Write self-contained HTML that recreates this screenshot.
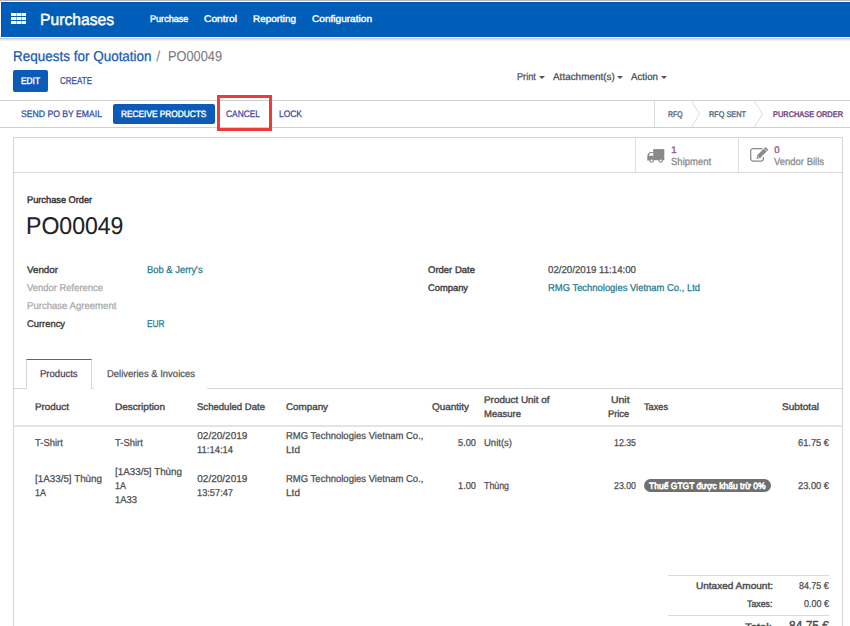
<!DOCTYPE html>
<html><head><meta charset="utf-8"><title>Purchase Order PO00049</title>
<style>
html,body{margin:0;padding:0;background:#fff;width:850px;height:626px;overflow:hidden;position:relative;font-family:"Liberation Sans", sans-serif;text-rendering:geometricPrecision;}
</style></head><body>
<div style="position:absolute;left:0px;top:0px;width:850px;height:1px;background:#b8b8b8"></div>
<div style="position:absolute;left:1px;top:2px;width:849px;height:35px;background:#005EB8;box-shadow:inset 1px 1px 0 #0050ae"></div>
<div style="position:absolute;left:0px;top:38px;width:850px;height:1px;background:#c9c9c9"></div>
<div style="position:absolute;left:0px;top:39px;width:850px;height:1px;background:#e2e2e2"></div>
<div style="position:absolute;left:0px;top:40px;width:850px;height:1px;background:#f2f2f2"></div>
<div style="position:absolute;left:11px;top:13px;width:15px;height:3px;background:#fff"></div>
<div style="position:absolute;left:11px;top:17px;width:15px;height:3px;background:#fff"></div>
<div style="position:absolute;left:11px;top:21px;width:15px;height:3px;background:#fff"></div>
<div style="position:absolute;left:16px;top:13px;width:1px;height:11px;background:rgba(0,94,184,0.45)"></div>
<div style="position:absolute;left:21px;top:13px;width:1px;height:11px;background:rgba(0,94,184,0.45)"></div>
<div style="position:absolute;left:13px;top:70px;width:35px;height:22px;background:#0a5cb8;border-radius:2px"></div>
<div style="position:absolute;left:539px;top:76px;width:0;height:0;border-left:3px solid transparent;border-right:3px solid transparent;border-top:3px solid #555"></div>
<div style="position:absolute;left:616.5px;top:76px;width:0;height:0;border-left:3px solid transparent;border-right:3px solid transparent;border-top:3px solid #555"></div>
<div style="position:absolute;left:660.5px;top:76px;width:0;height:0;border-left:3px solid transparent;border-right:3px solid transparent;border-top:3px solid #555"></div>
<div style="position:absolute;left:0px;top:100px;width:850px;height:1px;background:#d0d0d0"></div>
<div style="position:absolute;left:0px;top:127px;width:850px;height:1px;background:#d0d0d0"></div>
<div style="position:absolute;left:113px;top:104px;width:102px;height:20px;background:#0a5cb8;border-radius:2px"></div>
<div style="position:absolute;left:654px;top:101px;width:1px;height:26px;background:#dcdcdc"></div>
<svg style="position:absolute;left:0;top:0" width="850" height="626"><g fill="none" stroke="#dedede" stroke-width="1"><polyline points="691.5,101 699.5,114 691.5,127"/><polyline points="754.5,101 762.5,114 754.5,127"/></g></svg>
<div style="position:absolute;left:217px;top:95px;width:55px;height:36px;border:3px solid #ee3a3a;box-sizing:border-box"></div>
<div style="position:absolute;left:13px;top:137px;width:830px;height:600px;border:1px solid #d4d4d4;box-sizing:border-box;background:#fff"></div>
<div style="position:absolute;left:14px;top:172px;width:828px;height:1px;background:#dcd8dc"></div>
<div style="position:absolute;left:635px;top:138px;width:1px;height:34px;background:#e0e0e0"></div>
<div style="position:absolute;left:738px;top:138px;width:1px;height:34px;background:#e0e0e0"></div>
<svg style="position:absolute;left:0;top:0" width="850" height="626" viewBox="0 0 850 626"><g fill="#8a8a8a"><rect x="653.2" y="149.1" width="11.1" height="11.1"/><path d="M647.2 160.6 L647.4 155.6 Q647.9 152.1 651.2 152.1 L653.6 152.1 L653.6 160.6 Z"/><circle cx="651.6" cy="160.6" r="2.2"/><circle cx="660.7" cy="160.6" r="2.2"/></g><path fill="#fff" d="M648.9 155.8 L649.1 154.7 Q649.6 152.9 651.2 152.9 L653.1 152.9 V155.8 Z"/><circle cx="651.6" cy="160.6" r="1.1" fill="#fff"/><circle cx="660.7" cy="160.6" r="1.1" fill="#fff"/><path fill="none" stroke="#8a8a8a" stroke-width="1.25" d="M762.5 148.7 H753.1 a2.4 2.4 0 0 0 -2.4 2.4 V158.6 a2.4 2.4 0 0 0 2.4 2.4 H761.1 a2.4 2.4 0 0 0 2.4 -2.4 V157"/><path fill="#8a8a8a" d="M756.4 158.9 L757.4 155.1 L765.6 146.9 L768.4 149.7 L760.2 157.9 Z"/><path stroke="#fff" stroke-width="0.7" d="M764.1 148.4 L766.9 151.2"/><path fill="#fff" d="M757.6 157.7 L758.1 156.2 L759.1 157.2 Z"/></svg>
<div style="position:absolute;left:14px;top:388px;width:12px;height:1px;background:#d8d8d8"></div>
<div style="position:absolute;left:92px;top:388px;width:2px;height:1px;background:#d8d8d8"></div>
<div style="position:absolute;left:207px;top:388px;width:635px;height:1px;background:#d8d8d8"></div>
<div style="position:absolute;left:26px;top:359px;width:66px;height:30px;border:1px solid #d8d8d8;border-top:1px solid #7f4f86;border-bottom:none;box-sizing:border-box;background:#fff"></div>
<div style="position:absolute;left:14px;top:425px;width:828px;height:2px;background:#e4e4e4"></div>
<div style="position:absolute;left:643.6px;top:479.4px;width:127.2px;height:13px;background:#6f6f6f;border-radius:7px"></div>
<div style="position:absolute;left:668px;top:575px;width:161px;height:1px;background:#dadada"></div>
<div style="position:absolute;left:668px;top:615px;width:161px;height:1px;background:#dadada"></div>
<div style="position:absolute;left:39.53px;top:12px;white-space:nowrap;font-size:16.2px;line-height:16.2px;font-weight:400;color:#ffffff;transform:scaleX(0.9677);transform-origin:0 0;-webkit-text-stroke:0.45px #ffffff;">Purchases</div>
<div style="position:absolute;left:150.00px;top:15px;white-space:nowrap;font-size:9.6px;line-height:9.6px;font-weight:400;color:#ffffff;transform:scaleX(0.9475);transform-origin:0 0;-webkit-text-stroke:0.4px #ffffff;">Purchase</div>
<div style="position:absolute;left:204.40px;top:15px;white-space:nowrap;font-size:9.6px;line-height:9.6px;font-weight:400;color:#ffffff;transform:scaleX(1.0669);transform-origin:0 0;-webkit-text-stroke:0.4px #ffffff;">Control</div>
<div style="position:absolute;left:253.00px;top:15px;white-space:nowrap;font-size:9.6px;line-height:9.6px;font-weight:400;color:#ffffff;transform:scaleX(1.0334);transform-origin:0 0;-webkit-text-stroke:0.4px #ffffff;">Reporting</div>
<div style="position:absolute;left:312.30px;top:15px;white-space:nowrap;font-size:9.6px;line-height:9.6px;font-weight:400;color:#ffffff;transform:scaleX(1.0512);transform-origin:0 0;-webkit-text-stroke:0.4px #ffffff;">Configuration</div>
<div style="position:absolute;left:12.96px;top:50px;white-space:nowrap;font-size:14.3px;line-height:14.3px;font-weight:400;color:#175aad;transform:scaleX(0.9427);transform-origin:0 0;-webkit-text-stroke:0.25px #175aad;">Requests for Quotation</div>
<div style="position:absolute;left:156.20px;top:50px;white-space:nowrap;font-size:14.3px;line-height:14.3px;font-weight:400;color:#8a8a8a;-webkit-text-stroke:0.1px #8a8a8a;">/</div>
<div style="position:absolute;left:167.80px;top:50px;white-space:nowrap;font-size:14.3px;line-height:14.3px;font-weight:400;color:#7a7a7a;transform:scaleX(0.8937);transform-origin:0 0;-webkit-text-stroke:0.1px #7a7a7a;">PO00049</div>
<div style="position:absolute;left:21.00px;top:77px;white-space:nowrap;font-size:9.6px;line-height:9.6px;font-weight:400;color:#ffffff;transform:scaleX(0.8692);transform-origin:0 0;-webkit-text-stroke:0.4px #ffffff;">EDIT</div>
<div style="position:absolute;left:60.00px;top:77px;white-space:nowrap;font-size:10.0px;line-height:10.0px;font-weight:400;color:#2f4aa6;transform:scaleX(0.8036);transform-origin:0 0;-webkit-text-stroke:0.25px #2f4aa6;">CREATE</div>
<div style="position:absolute;left:517.00px;top:73px;white-space:nowrap;font-size:10.0px;line-height:10.0px;font-weight:400;color:#4c4c4c;transform:scaleX(0.9152);transform-origin:0 0;-webkit-text-stroke:0.25px #4c4c4c;">Print</div>
<div style="position:absolute;left:553.00px;top:73px;white-space:nowrap;font-size:10.0px;line-height:10.0px;font-weight:400;color:#4c4c4c;transform:scaleX(0.9928);transform-origin:0 0;-webkit-text-stroke:0.25px #4c4c4c;">Attachment(s)</div>
<div style="position:absolute;left:630.70px;top:73px;white-space:nowrap;font-size:10.0px;line-height:10.0px;font-weight:400;color:#4c4c4c;transform:scaleX(0.9713);transform-origin:0 0;-webkit-text-stroke:0.25px #4c4c4c;">Action</div>
<div style="position:absolute;left:21.20px;top:109px;white-space:nowrap;font-size:9.4px;line-height:9.4px;font-weight:400;color:#2f4aa6;transform:scaleX(0.9216);transform-origin:0 0;-webkit-text-stroke:0.25px #2f4aa6;">SEND PO BY EMAIL</div>
<div style="position:absolute;left:121.20px;top:110px;white-space:nowrap;font-size:9.2px;line-height:9.2px;font-weight:400;color:#ffffff;transform:scaleX(0.9042);transform-origin:0 0;-webkit-text-stroke:0.4px #ffffff;">RECEIVE PRODUCTS</div>
<div style="position:absolute;left:225.90px;top:109px;white-space:nowrap;font-size:9.4px;line-height:9.4px;font-weight:400;color:#2f4aa6;transform:scaleX(0.8942);transform-origin:0 0;-webkit-text-stroke:0.25px #2f4aa6;">CANCEL</div>
<div style="position:absolute;left:279.40px;top:109px;white-space:nowrap;font-size:9.4px;line-height:9.4px;font-weight:400;color:#2f4aa6;transform:scaleX(0.9009);transform-origin:0 0;-webkit-text-stroke:0.25px #2f4aa6;">LOCK</div>
<div style="position:absolute;left:667.60px;top:111px;white-space:nowrap;font-size:8.2px;line-height:8.2px;font-weight:400;color:#5f6f82;transform:scaleX(0.8459);transform-origin:0 0;-webkit-text-stroke:0.4px #5f6f82;">RFQ</div>
<div style="position:absolute;left:709.30px;top:111px;white-space:nowrap;font-size:8.2px;line-height:8.2px;font-weight:400;color:#5f6f82;transform:scaleX(0.8936);transform-origin:0 0;-webkit-text-stroke:0.4px #5f6f82;">RFQ SENT</div>
<div style="position:absolute;left:772.90px;top:111px;white-space:nowrap;font-size:8.2px;line-height:8.2px;font-weight:400;color:#73477a;transform:scaleX(0.9051);transform-origin:0 0;-webkit-text-stroke:0.4px #73477a;">PURCHASE ORDER</div>
<div style="position:absolute;left:671.20px;top:146px;white-space:nowrap;font-size:9.6px;line-height:9.6px;font-weight:400;color:#935e96;-webkit-text-stroke:0.4px #935e96;">1</div>
<div style="position:absolute;left:671.00px;top:158px;white-space:nowrap;font-size:10.3px;line-height:10.3px;font-weight:400;color:#888888;transform:scaleX(0.9239);transform-origin:0 0;-webkit-text-stroke:0.25px #888888;">Shipment</div>
<div style="position:absolute;left:774.20px;top:146px;white-space:nowrap;font-size:9.6px;line-height:9.6px;font-weight:400;color:#935e96;-webkit-text-stroke:0.4px #935e96;">0</div>
<div style="position:absolute;left:774.00px;top:158px;white-space:nowrap;font-size:10.3px;line-height:10.3px;font-weight:400;color:#888888;transform:scaleX(0.9193);transform-origin:0 0;-webkit-text-stroke:0.25px #888888;">Vendor Bills</div>
<div style="position:absolute;left:26.80px;top:196px;white-space:nowrap;font-size:9.6px;line-height:9.6px;font-weight:400;color:#2e2e2e;transform:scaleX(0.9628);transform-origin:0 0;-webkit-text-stroke:0.4px #2e2e2e;">Purchase Order</div>
<div style="position:absolute;left:26.35px;top:215px;white-space:nowrap;font-size:24.3px;line-height:24.3px;font-weight:400;color:#222;transform:scaleX(0.9490);transform-origin:0 0;-webkit-text-stroke:0.1px #222;">PO00049</div>
<div style="position:absolute;left:26.60px;top:266px;white-space:nowrap;font-size:9.6px;line-height:9.6px;font-weight:400;color:#3e3e3e;transform:scaleX(1.0190);transform-origin:0 0;-webkit-text-stroke:0.4px #3e3e3e;">Vendor</div>
<div style="position:absolute;left:26.60px;top:284px;white-space:nowrap;font-size:10.0px;line-height:10.0px;font-weight:400;color:#a8a8a8;transform:scaleX(0.9426);transform-origin:0 0;-webkit-text-stroke:0.25px #a8a8a8;">Vendor Reference</div>
<div style="position:absolute;left:26.60px;top:302px;white-space:nowrap;font-size:10.0px;line-height:10.0px;font-weight:400;color:#a8a8a8;transform:scaleX(0.9573);transform-origin:0 0;-webkit-text-stroke:0.25px #a8a8a8;">Purchase Agreement</div>
<div style="position:absolute;left:26.60px;top:320px;white-space:nowrap;font-size:9.6px;line-height:9.6px;font-weight:400;color:#3e3e3e;transform:scaleX(0.9765);transform-origin:0 0;-webkit-text-stroke:0.4px #3e3e3e;">Currency</div>
<div style="position:absolute;left:146.70px;top:266px;white-space:nowrap;font-size:10.0px;line-height:10.0px;font-weight:400;color:#217a8e;transform:scaleX(0.9399);transform-origin:0 0;-webkit-text-stroke:0.25px #217a8e;">Bob & Jerry's</div>
<div style="position:absolute;left:146.70px;top:320px;white-space:nowrap;font-size:10.0px;line-height:10.0px;font-weight:400;color:#217a8e;transform:scaleX(0.8334);transform-origin:0 0;-webkit-text-stroke:0.25px #217a8e;">EUR</div>
<div style="position:absolute;left:427.60px;top:266px;white-space:nowrap;font-size:9.6px;line-height:9.6px;font-weight:400;color:#3e3e3e;transform:scaleX(0.9901);transform-origin:0 0;-webkit-text-stroke:0.4px #3e3e3e;">Order Date</div>
<div style="position:absolute;left:427.60px;top:284px;white-space:nowrap;font-size:9.6px;line-height:9.6px;font-weight:400;color:#3e3e3e;transform:scaleX(0.9747);transform-origin:0 0;-webkit-text-stroke:0.4px #3e3e3e;">Company</div>
<div style="position:absolute;left:548.00px;top:266px;white-space:nowrap;font-size:10.0px;line-height:10.0px;font-weight:400;color:#4c4c4c;transform:scaleX(0.9669);transform-origin:0 0;-webkit-text-stroke:0.25px #4c4c4c;">02/20/2019 11:14:00</div>
<div style="position:absolute;left:548.00px;top:284px;white-space:nowrap;font-size:10.0px;line-height:10.0px;font-weight:400;color:#217a8e;transform:scaleX(0.9418);transform-origin:0 0;-webkit-text-stroke:0.25px #217a8e;">RMG Technologies Vietnam Co., Ltd</div>
<div style="position:absolute;left:40.30px;top:370px;white-space:nowrap;font-size:10.0px;line-height:10.0px;font-weight:400;color:#4c3c5c;transform:scaleX(0.9530);transform-origin:0 0;-webkit-text-stroke:0.25px #4c3c5c;">Products</div>
<div style="position:absolute;left:106.50px;top:370px;white-space:nowrap;font-size:10.0px;line-height:10.0px;font-weight:400;color:#555;transform:scaleX(0.9481);transform-origin:0 0;-webkit-text-stroke:0.25px #555;">Deliveries & Invoices</div>
<div style="position:absolute;left:34.50px;top:403px;white-space:nowrap;font-size:9.6px;line-height:9.6px;font-weight:400;color:#4c4c4c;transform:scaleX(1.0287);transform-origin:0 0;-webkit-text-stroke:0.4px #4c4c4c;">Product</div>
<div style="position:absolute;left:114.70px;top:403px;white-space:nowrap;font-size:9.6px;line-height:9.6px;font-weight:400;color:#4c4c4c;transform:scaleX(1.0417);transform-origin:0 0;-webkit-text-stroke:0.4px #4c4c4c;">Description</div>
<div style="position:absolute;left:197.30px;top:403px;white-space:nowrap;font-size:9.6px;line-height:9.6px;font-weight:400;color:#4c4c4c;transform:scaleX(0.9959);transform-origin:0 0;-webkit-text-stroke:0.4px #4c4c4c;">Scheduled Date</div>
<div style="position:absolute;left:285.60px;top:403px;white-space:nowrap;font-size:9.6px;line-height:9.6px;font-weight:400;color:#4c4c4c;transform:scaleX(1.0228);transform-origin:0 0;-webkit-text-stroke:0.4px #4c4c4c;">Company</div>
<div style="position:absolute;left:431.50px;top:403px;white-space:nowrap;font-size:9.6px;line-height:9.6px;font-weight:400;color:#4c4c4c;transform:scaleX(1.0361);transform-origin:0 0;-webkit-text-stroke:0.4px #4c4c4c;">Quantity</div>
<div style="position:absolute;left:483.60px;top:396px;white-space:nowrap;font-size:9.6px;line-height:9.6px;font-weight:400;color:#4c4c4c;transform:scaleX(1.0336);transform-origin:0 0;-webkit-text-stroke:0.4px #4c4c4c;">Product Unit of</div>
<div style="position:absolute;left:483.60px;top:410px;white-space:nowrap;font-size:9.6px;line-height:9.6px;font-weight:400;color:#4c4c4c;transform:scaleX(0.9912);transform-origin:0 0;-webkit-text-stroke:0.4px #4c4c4c;">Measure</div>
<div style="position:absolute;left:610.50px;top:396px;white-space:nowrap;font-size:9.6px;line-height:9.6px;font-weight:400;color:#4c4c4c;transform:scaleX(1.0902);transform-origin:0 0;-webkit-text-stroke:0.4px #4c4c4c;">Unit</div>
<div style="position:absolute;left:607.80px;top:410px;white-space:nowrap;font-size:9.6px;line-height:9.6px;font-weight:400;color:#4c4c4c;transform:scaleX(0.9612);transform-origin:0 0;-webkit-text-stroke:0.4px #4c4c4c;">Price</div>
<div style="position:absolute;left:643.60px;top:403px;white-space:nowrap;font-size:9.6px;line-height:9.6px;font-weight:400;color:#4c4c4c;transform:scaleX(0.9576);transform-origin:0 0;-webkit-text-stroke:0.4px #4c4c4c;">Taxes</div>
<div style="position:absolute;left:781.80px;top:403px;white-space:nowrap;font-size:9.6px;line-height:9.6px;font-weight:400;color:#4c4c4c;transform:scaleX(1.0508);transform-origin:0 0;-webkit-text-stroke:0.4px #4c4c4c;">Subtotal</div>
<div style="position:absolute;left:34.50px;top:439px;white-space:nowrap;font-size:10.0px;line-height:10.0px;font-weight:400;color:#4c4c4c;transform:scaleX(0.9443);transform-origin:0 0;-webkit-text-stroke:0.25px #4c4c4c;">T-Shirt</div>
<div style="position:absolute;left:114.70px;top:439px;white-space:nowrap;font-size:10.0px;line-height:10.0px;font-weight:400;color:#4c4c4c;transform:scaleX(0.9443);transform-origin:0 0;-webkit-text-stroke:0.25px #4c4c4c;">T-Shirt</div>
<div style="position:absolute;left:197.30px;top:432px;white-space:nowrap;font-size:10.0px;line-height:10.0px;font-weight:400;color:#4c4c4c;-webkit-text-stroke:0.25px #4c4c4c;">02/20/2019</div>
<div style="position:absolute;left:197.30px;top:446px;white-space:nowrap;font-size:10.0px;line-height:10.0px;font-weight:400;color:#4c4c4c;transform:scaleX(0.9429);transform-origin:0 0;-webkit-text-stroke:0.25px #4c4c4c;">11:14:14</div>
<div style="position:absolute;left:285.60px;top:432px;white-space:nowrap;font-size:10.0px;line-height:10.0px;font-weight:400;color:#4c4c4c;transform:scaleX(0.9496);transform-origin:0 0;-webkit-text-stroke:0.25px #4c4c4c;">RMG Technologies Vietnam Co.,</div>
<div style="position:absolute;left:285.60px;top:446px;white-space:nowrap;font-size:10.0px;line-height:10.0px;font-weight:400;color:#4c4c4c;transform:scaleX(1.0067);transform-origin:0 0;-webkit-text-stroke:0.25px #4c4c4c;">Ltd</div>
<div style="position:absolute;left:458.00px;top:439px;white-space:nowrap;font-size:10.0px;line-height:10.0px;font-weight:400;color:#4c4c4c;transform:scaleX(0.9246);transform-origin:0 0;-webkit-text-stroke:0.25px #4c4c4c;">5.00</div>
<div style="position:absolute;left:483.60px;top:439px;white-space:nowrap;font-size:10.0px;line-height:10.0px;font-weight:400;color:#4c4c4c;transform:scaleX(0.9507);transform-origin:0 0;-webkit-text-stroke:0.25px #4c4c4c;">Unit(s)</div>
<div style="position:absolute;left:613.70px;top:439px;white-space:nowrap;font-size:10.0px;line-height:10.0px;font-weight:400;color:#4c4c4c;transform:scaleX(0.8789);transform-origin:0 0;-webkit-text-stroke:0.25px #4c4c4c;">12.35</div>
<div style="position:absolute;left:797.80px;top:439px;white-space:nowrap;font-size:10.0px;line-height:10.0px;font-weight:400;color:#4c4c4c;transform:scaleX(0.9288);transform-origin:0 0;-webkit-text-stroke:0.25px #4c4c4c;">61.75 €</div>
<div style="position:absolute;left:34.50px;top:475px;white-space:nowrap;font-size:10.0px;line-height:10.0px;font-weight:400;color:#4c4c4c;transform:scaleX(0.9824);transform-origin:0 0;-webkit-text-stroke:0.25px #4c4c4c;">[1A33/5] Thùng</div>
<div style="position:absolute;left:34.50px;top:489px;white-space:nowrap;font-size:10.0px;line-height:10.0px;font-weight:400;color:#4c4c4c;transform:scaleX(0.8991);transform-origin:0 0;-webkit-text-stroke:0.25px #4c4c4c;">1A</div>
<div style="position:absolute;left:114.70px;top:468px;white-space:nowrap;font-size:10.0px;line-height:10.0px;font-weight:400;color:#4c4c4c;transform:scaleX(0.9824);transform-origin:0 0;-webkit-text-stroke:0.25px #4c4c4c;">[1A33/5] Thùng</div>
<div style="position:absolute;left:114.70px;top:482px;white-space:nowrap;font-size:10.0px;line-height:10.0px;font-weight:400;color:#4c4c4c;transform:scaleX(0.8991);transform-origin:0 0;-webkit-text-stroke:0.25px #4c4c4c;">1A</div>
<div style="position:absolute;left:114.70px;top:496px;white-space:nowrap;font-size:10.0px;line-height:10.0px;font-weight:400;color:#4c4c4c;transform:scaleX(0.9418);transform-origin:0 0;-webkit-text-stroke:0.25px #4c4c4c;">1A33</div>
<div style="position:absolute;left:197.30px;top:475px;white-space:nowrap;font-size:10.0px;line-height:10.0px;font-weight:400;color:#4c4c4c;-webkit-text-stroke:0.25px #4c4c4c;">02/20/2019</div>
<div style="position:absolute;left:197.30px;top:489px;white-space:nowrap;font-size:10.0px;line-height:10.0px;font-weight:400;color:#4c4c4c;transform:scaleX(0.9247);transform-origin:0 0;-webkit-text-stroke:0.25px #4c4c4c;">13:57:47</div>
<div style="position:absolute;left:285.60px;top:475px;white-space:nowrap;font-size:10.0px;line-height:10.0px;font-weight:400;color:#4c4c4c;transform:scaleX(0.9496);transform-origin:0 0;-webkit-text-stroke:0.25px #4c4c4c;">RMG Technologies Vietnam Co.,</div>
<div style="position:absolute;left:285.60px;top:489px;white-space:nowrap;font-size:10.0px;line-height:10.0px;font-weight:400;color:#4c4c4c;transform:scaleX(1.0067);transform-origin:0 0;-webkit-text-stroke:0.25px #4c4c4c;">Ltd</div>
<div style="position:absolute;left:458.00px;top:482px;white-space:nowrap;font-size:10.0px;line-height:10.0px;font-weight:400;color:#4c4c4c;transform:scaleX(0.9246);transform-origin:0 0;-webkit-text-stroke:0.25px #4c4c4c;">1.00</div>
<div style="position:absolute;left:483.60px;top:482px;white-space:nowrap;font-size:10.0px;line-height:10.0px;font-weight:400;color:#4c4c4c;transform:scaleX(0.8815);transform-origin:0 0;-webkit-text-stroke:0.25px #4c4c4c;">Thùng</div>
<div style="position:absolute;left:613.70px;top:482px;white-space:nowrap;font-size:10.0px;line-height:10.0px;font-weight:400;color:#4c4c4c;transform:scaleX(0.8789);transform-origin:0 0;-webkit-text-stroke:0.25px #4c4c4c;">23.00</div>
<div style="position:absolute;left:649.40px;top:482px;white-space:nowrap;font-size:9.2px;line-height:9.2px;font-weight:400;color:#ffffff;transform:scaleX(0.9261);transform-origin:0 0;-webkit-text-stroke:0.6px #ffffff;">Thuế GTGT được khấu trừ 0%</div>
<div style="position:absolute;left:797.80px;top:482px;white-space:nowrap;font-size:10.0px;line-height:10.0px;font-weight:400;color:#4c4c4c;transform:scaleX(0.9288);transform-origin:0 0;-webkit-text-stroke:0.25px #4c4c4c;">23.00 €</div>
<div style="position:absolute;left:695.80px;top:582px;white-space:nowrap;font-size:9.6px;line-height:9.6px;font-weight:400;color:#4c4c4c;transform:scaleX(1.0461);transform-origin:0 0;-webkit-text-stroke:0.4px #4c4c4c;">Untaxed Amount:</div>
<div style="position:absolute;left:798.60px;top:582px;white-space:nowrap;font-size:10.0px;line-height:10.0px;font-weight:400;color:#4c4c4c;transform:scaleX(0.8874);transform-origin:0 0;-webkit-text-stroke:0.25px #4c4c4c;">84.75 €</div>
<div style="position:absolute;left:746.60px;top:600px;white-space:nowrap;font-size:9.6px;line-height:9.6px;font-weight:400;color:#4c4c4c;transform:scaleX(0.9160);transform-origin:0 0;-webkit-text-stroke:0.4px #4c4c4c;">Taxes:</div>
<div style="position:absolute;left:803.90px;top:600px;white-space:nowrap;font-size:10.0px;line-height:10.0px;font-weight:400;color:#4c4c4c;transform:scaleX(0.8989);transform-origin:0 0;-webkit-text-stroke:0.25px #4c4c4c;">0.00 €</div>
<div style="position:absolute;left:745.30px;top:623px;white-space:nowrap;font-size:9.6px;line-height:9.6px;font-weight:400;color:#4c4c4c;transform:scaleX(1.1771);transform-origin:0 0;-webkit-text-stroke:0.4px #4c4c4c;">Total:</div>
<div style="position:absolute;left:788.90px;top:619px;white-space:nowrap;font-size:13px;line-height:13px;font-weight:400;color:#4c4c4c;transform:scaleX(0.9222);transform-origin:0 0;-webkit-text-stroke:0.4px #4c4c4c;">84.75 €</div>
</body></html>
